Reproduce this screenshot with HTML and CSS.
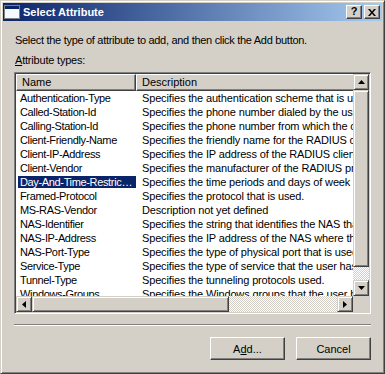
FILE: index.html
```html
<!DOCTYPE html>
<html lang="en">

<head>
    <meta charset="UTF-8">
    <meta name="viewport" content="width=device-width, initial-scale=1.0">
    <title>Select Attribute</title>
    <link rel="stylesheet" href="styles.css">
</head>

<body>

    <div class="window">
        <div class="titlebar">
            <svg class="title-icon" width="16" height="16" viewBox="0 0 16 16">
                <rect x="0.5" y="1.5" width="15" height="13" fill="#fff" stroke="#808080"/>
                <rect x="1" y="2" width="14" height="3" fill="#0a246a"/>
                <rect x="1" y="5" width="14" height="9" fill="#f4f8ff"/>
            </svg>
            <span class="title-text">Select Attribute</span>
            <div class="caption-buttons">
                <div class="caption-btn help">?</div>
                <div class="caption-btn close">
                    <svg width="8" height="7" viewBox="0 0 8 7">
                        <path d="M0 0h2l2 2.5L6 0h2L5 3.5 8 7H6L4 4.5 2 7H0l3-3.5z" fill="#000"/>
                    </svg>
                </div>
            </div>
        </div>

        <div class="client">
            <p class="intro">Select the type of attribute to add, and then click the Add button.</p>
            <div class="label"><u>A</u>ttribute types:</div>

            <div class="listview">
                <div class="lv-content">
                    <div class="lv-table">
                        <div class="lv-header">
                            <div class="hd-cell col-name">Name</div>
                            <div class="hd-cell col-desc">Description</div>
                        </div>
                        <div id="rows"></div>
                    </div>
                </div>

                <div class="vscroll">
                    <div class="sb-btn">
                        <svg width="7" height="4" viewBox="0 0 7 4"><polygon points="3.5,0 7,4 0,4" fill="#000"/></svg>
                    </div>
                    <div class="sb-thumb vthumb"></div>
                    <div class="sb-track"></div>
                    <div class="sb-btn">
                        <svg width="7" height="4" viewBox="0 0 7 4"><polygon points="0,0 7,0 3.5,4" fill="#000"/></svg>
                    </div>
                </div>

                <div class="hscroll">
                    <div class="sb-btn">
                        <svg width="4" height="7" viewBox="0 0 4 7"><polygon points="4,0 4,7 0,3.5" fill="#000"/></svg>
                    </div>
                    <div class="sb-thumb hthumb"></div>
                    <div class="sb-track"></div>
                    <div class="sb-btn">
                        <svg width="4" height="7" viewBox="0 0 4 7"><polygon points="0,0 4,3.5 0,7" fill="#000"/></svg>
                    </div>
                </div>

                <div class="sb-corner"></div>
            </div>

            <div class="separator"></div>

            <div class="buttons">
                <button class="btn">A<u>d</u>d...</button>
                <button class="btn">Cancel</button>
            </div>
        </div>
    </div>

    <script>
        const attributes = [
            ['Authentication-Type', 'Specifies the authentication scheme that is used to verify the user.'],
            ['Called-Station-Id', 'Specifies the phone number dialed by the user.'],
            ['Calling-Station-Id', 'Specifies the phone number from which the call originated.'],
            ['Client-Friendly-Name', 'Specifies the friendly name for the RADIUS client.'],
            ['Client-IP-Address', 'Specifies the IP address of the RADIUS client.'],
            ['Client-Vendor', 'Specifies the manufacturer of the RADIUS proxy or NAS.'],
            ['Day-And-Time-Restrictions', 'Specifies the time periods and days of week during which the user is allowed to connect.'],
            ['Framed-Protocol', 'Specifies the protocol that is used.'],
            ['MS-RAS-Vendor', 'Description not yet defined'],
            ['NAS-Identifier', 'Specifies the string that identifies the NAS that originated the request.'],
            ['NAS-IP-Address', 'Specifies the IP address of the NAS where the request originates.'],
            ['NAS-Port-Type', 'Specifies the type of physical port that is used by the NAS.'],
            ['Service-Type', 'Specifies the type of service that the user has requested.'],
            ['Tunnel-Type', 'Specifies the tunneling protocols used.'],
            ['Windows-Groups', 'Specifies the Windows groups that the user belongs to.']
        ];
        const selectedIndex = 6;

        function renderRows() {
            const rows = document.getElementById('rows');
            let html = '';
            attributes.forEach(function (attr, i) {
                const cls = i === selectedIndex ? 'name-text selected' : 'name-text';
                html += `
                <div class="lv-row">
                    <div class="cell col-name"><span class="${cls}">${attr[0]}</span></div>
                    <div class="cell col-desc">${attr[1]}</div>
                </div>
                `;
            });
            rows.innerHTML = html;
        }

        renderRows();
    </script>
</body>

</html>
```

FILE: styles.css
```css
html,
body {
    margin: 0;
    padding: 0;
}

body {
    font-family: "Liberation Sans", Arial, sans-serif;
    font-size: 11px;
    color: #000;
    background-color: #d4d0c8;
}

.window {
    width: 385px;
    height: 374px;
    box-sizing: border-box;
    padding: 2px;
    border: 1px solid;
    border-color: #d4d0c8 #404040 #404040 #d4d0c8;
    box-shadow: inset 1px 1px #fff, inset -1px -1px #808080;
    background-color: #d4d0c8;
    display: flex;
    flex-direction: column;
}

.titlebar {
    height: 18px;
    display: flex;
    align-items: center;
    padding-left: 1px;
    padding-right: 2px;
    background: linear-gradient(to right, #0a246a, #a6caf0);
}

.title-icon {
    display: block;
    flex: none;
}

.title-text {
    margin-left: 3px;
    color: #fff;
    font-weight: bold;
    font-size: 11px;
    flex: 1;
}

.caption-buttons {
    display: flex;
}

.caption-btn {
    width: 16px;
    height: 14px;
    box-sizing: border-box;
    border: 1px solid;
    border-color: #fff #404040 #404040 #fff;
    box-shadow: inset -1px -1px #808080;
    background-color: #d4d0c8;
    display: flex;
    align-items: center;
    justify-content: center;
}

.caption-btn.help {
    font-weight: bold;
    font-size: 11px;
    line-height: 11px;
    padding-bottom: 1px;
}

.caption-btn.close {
    margin-left: 2px;
}

.caption-btn svg {
    display: block;
}

.client {
    flex: 1;
    padding: 13px 11px 0 11px;
}

.intro {
    margin: 0;
    padding-left: 1px;
    line-height: 13px;
    letter-spacing: -0.3px;
}

.label {
    margin-top: 7px;
    padding-left: 1px;
    line-height: 13px;
    letter-spacing: -0.2px;
}

.listview {
    margin-top: 5px;
    height: 242px;
    box-sizing: border-box;
    border: 1px solid;
    border-color: #808080 #fff #fff #808080;
    box-shadow: inset 1px 1px #404040, inset -1px -1px #d4d0c8;
    padding: 1px;
    background-color: #fff;
    display: grid;
    grid-template-columns: 1fr 16px;
    grid-template-rows: 1fr 16px;
}

.lv-content {
    overflow: hidden;
    background-color: #fff;
}

.lv-table {
    width: 640px;
}

.lv-header {
    display: flex;
    height: 17px;
}

.hd-cell {
    box-sizing: border-box;
    height: 17px;
    line-height: 15px;
    padding-left: 5px;
    border: 1px solid;
    border-color: #fff #404040 #404040 #fff;
    box-shadow: inset -1px -1px #808080;
    background-color: #d4d0c8;
    white-space: nowrap;
}

.col-name {
    width: 120px;
    flex: none;
}

.col-desc {
    flex: 1;
}

.lv-row {
    display: flex;
    height: 14px;
    line-height: 14px;
}

.cell {
    box-sizing: border-box;
    white-space: nowrap;
    overflow: hidden;
}

.cell.col-name {
    padding-left: 2px;
    letter-spacing: -0.35px;
}

.cell.col-desc {
    padding-left: 6px;
    letter-spacing: -0.15px;
}

.name-text {
    display: block;
    padding: 0 2px;
    overflow: hidden;
    text-overflow: ellipsis;
}

.name-text.selected {
    margin-top: 1px;
    height: 12px;
    line-height: 12px;
    background-color: #0a246a;
    color: #fff;
}

.vscroll {
    display: flex;
    flex-direction: column;
}

.hscroll {
    display: flex;
}

.sb-btn {
    width: 16px;
    height: 16px;
    flex: none;
    box-sizing: border-box;
    border: 1px solid;
    border-color: #d4d0c8 #404040 #404040 #d4d0c8;
    box-shadow: inset 1px 1px #fff, inset -1px -1px #808080;
    background-color: #d4d0c8;
    display: flex;
    align-items: center;
    justify-content: center;
}

.sb-btn svg {
    display: block;
}

.sb-thumb {
    flex: none;
    box-sizing: border-box;
    border: 1px solid;
    border-color: #d4d0c8 #404040 #404040 #d4d0c8;
    box-shadow: inset 1px 1px #fff, inset -1px -1px #808080;
    background-color: #d4d0c8;
}

.vthumb {
    height: 177px;
}

.hthumb {
    width: 197px;
}

.sb-track {
    flex: 1;
    background: repeating-conic-gradient(#d4d0c8 0 25%, #fff 0 50%) 0 0 / 2px 2px;
}

.sb-corner {
    background-color: #d4d0c8;
}

.separator {
    margin-top: 10px;
    height: 0;
    border-top: 1px solid #808080;
    border-bottom: 1px solid #fff;
}

.buttons {
    margin-top: 11px;
    display: flex;
    justify-content: flex-end;
    gap: 11px;
}

.btn {
    width: 75px;
    height: 23px;
    padding: 0;
    font-family: "Liberation Sans", Arial, sans-serif;
    font-size: 11px;
    color: #000;
    background-color: #d4d0c8;
    border: 1px solid;
    border-color: #fff #404040 #404040 #fff;
    box-shadow: inset -1px -1px #808080;
    border-radius: 0;
}
```
